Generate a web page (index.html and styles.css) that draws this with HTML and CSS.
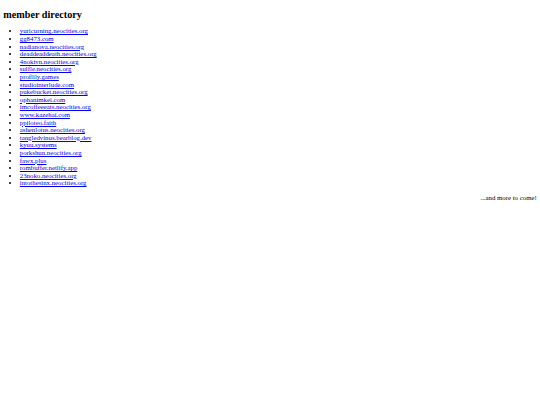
FILE: index.html
```html
<!DOCTYPE html>
<html>
<head>
<meta charset="utf-8">
<title>member directory</title>
<link rel="stylesheet" href="styles.css">
</head>
<body class="page">
<h2 class="title">member directory</h2>
<ul class="members">
<li><a href="#">yuricurning.neocities.org</a></li>
<li><a href="#">gg8473.com</a></li>
<li><a href="#">nadianova.neocities.org</a></li>
<li><a href="#">deaddeaddeath.neocities.org</a></li>
<li><a href="#">4nokivn.neocities.org</a></li>
<li><a href="#">sulfle.neocities.org</a></li>
<li><a href="#">proflily.games</a></li>
<li><a href="#">studiointerlude.com</a></li>
<li><a href="#">pukebucket.neocities.org</a></li>
<li><a href="#">ophanimkei.com</a></li>
<li><a href="#">imcoffeeeats.neocities.org</a></li>
<li><a href="#">www.kazehai.com</a></li>
<li><a href="#">ppiloteo.faith</a></li>
<li><a href="#">ashenlotus.neocities.org</a></li>
<li><a href="#">tangledvinus.bearblog.dev</a></li>
<li><a href="#">kyuu.systems</a></li>
<li><a href="#">porkshun.neocities.org</a></li>
<li><a href="#">fawx.plus</a></li>
<li><a href="#">rombuffer.netlify.app</a></li>
<li><a href="#">23noko.neocities.org</a></li>
<li><a href="#">intothesinx.neocities.org</a></li>
</ul>
<p class="more">...and more to come!</p>
</body>
</html>
```

FILE: styles.css
```css
.page {
  margin: 0 3.3px;
  padding-top: 0.1px;
  font-family: "Liberation Serif", "Times New Roman", serif;
  font-size: 6.8px;
  line-height: 7.6px;
  color: #000;
  background: #fff;
}
.title {
  font-size: 10.2px;
  line-height: 11px;
  font-weight: bold;
  margin: 9.2px 0 0;
}
.members {
  margin: 7.2px 0 0;
  padding-left: 16.5px;
}
.members a {
  color: #0000ee;
}
.more {
  text-align: right;
  margin: 7.1px 0 0;
}
```
